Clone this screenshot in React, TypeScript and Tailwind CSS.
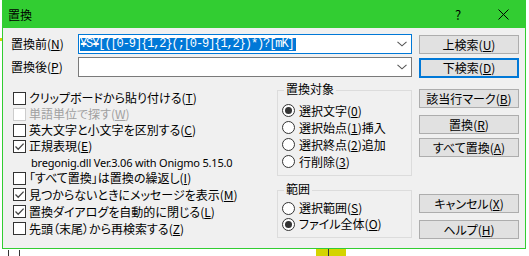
import type { ReactNode } from 'react'

const ui = "font-['Noto_Sans_CJK_JP','Noto_Sans',sans-serif] [font-feature-settings:'palt'] text-[12px] leading-none text-black"

function Key({ c }: { c: string }) {
  return (
    <>
      (<span className="underline underline-offset-[1px]">{c}</span>)
    </>
  )
}

function Chevron() {
  return (
    <svg width="10" height="6" viewBox="0 0 10 6" className="shrink-0">
      <path d="M0.5 0.8 L5 4.8 L9.5 0.8" fill="none" stroke="#555" strokeWidth="1.1" />
    </svg>
  )
}

function Check({ checked, disabled, children }: { checked?: boolean; disabled?: boolean; children: ReactNode }) {
  return (
    <div className="flex items-center h-[16px]">
      <span
        className={
          disabled
            ? 'w-[13px] h-[13px] border border-[#cccccc] bg-white shrink-0'
            : 'w-[13px] h-[13px] border border-[#333333] bg-white shrink-0 flex items-center justify-center'
        }
      >
        {checked && (
          <svg width="11" height="11" viewBox="0 0 11 11">
            <path d="M1.5 5.5 L4.2 8.2 L9.6 2.6" fill="none" stroke="#444" strokeWidth="1.3" />
          </svg>
        )}
      </span>
      <span className={disabled ? 'ml-[3px] text-[#a0a0a0] whitespace-nowrap' : 'ml-[3px] whitespace-nowrap'}>{children}</span>
    </div>
  )
}

function Radio({ on, children, h }: { on?: boolean; children: ReactNode; h: string }) {
  return (
    <div className={`flex items-center ${h}`}>
      <span className="w-[13px] h-[13px] rounded-full border border-[#333333] bg-white shrink-0 flex items-center justify-center">
        {on && <span className="w-[7px] h-[7px] rounded-full bg-[#333333]" />}
      </span>
      <span className="ml-[4px] whitespace-nowrap">{children}</span>
    </div>
  )
}

function Btn({ children, focus, mt }: { children: ReactNode; focus?: boolean; mt: string }) {
  return (
    <div
      className={
        focus
          ? `${mt} h-[20px] border-2 border-[#0078d7] bg-[#e1e1e1] flex items-center justify-center`
          : `${mt} h-[19px] border border-[#adadad] bg-[#e1e1e1] flex items-center justify-center`
      }
    >
      {children}
    </div>
  )
}

export default function App() {
  return (
    <div className={`relative w-[529px] h-[256px] bg-white overflow-hidden ${ui}`}>
      {/* what shows under the dialog */}
      <div className="absolute left-0 top-[38px] w-[2px] h-[3px] bg-[#d4d400]" />
      <div className="absolute left-[316px] top-[249px] w-[30px] h-[7px] bg-[#d4d400]" />
      <div className="absolute left-[8px] top-[250px] w-[1px] h-[6px] bg-[#333]" />
      <div className="absolute left-[19px] top-[250px] w-[1px] h-[6px] bg-[#333]" />
      <div className="absolute left-[328px] top-[249px] w-[1px] h-[7px] bg-[#333]" />

      <div className="ml-[2px] w-[524px] h-[249px] border border-[#32cd32] bg-[#f0f0f0] flex flex-col">
        {/* title bar */}
        <div className="h-[27px] bg-[#32cd32] flex items-center shrink-0">
          <span className="pl-[5px]">置換</span>
          <span className="ml-auto w-[46px] text-center text-[13px]">?</span>
          <span className="w-[44px] flex justify-center">
            <svg width="11" height="11" viewBox="0 0 11 11">
              <path d="M0.5 0.5 L10.5 10.5 M10.5 0.5 L0.5 10.5" stroke="#000" strokeWidth="1" />
            </svg>
          </span>
        </div>

        {/* body */}
        <div className="flex pt-[6px] pl-[8px]">
          <div className="w-[401px] flex flex-col">
            <div className="flex items-center h-[20px]">
              <span className="w-[67px]">
                置換前<Key c="N" />
              </span>
              <div className="w-[334px] h-[20px] border border-[#0078d7] bg-white flex items-center pl-[1px] pr-[4px]">
                <span className="h-[13px] leading-[13px] bg-[#0078d7] text-white font-['Liberation_Mono',monospace] text-[12px] tracking-[-1.1px] whitespace-nowrap pr-[2px]">
                  ¥S¥[([0-9]{'{'}1,2{'}'}(;[0-9]{'{'}1,2{'}'})*)?[mK]
                </span>
                <span className="ml-auto">
                  <Chevron />
                </span>
              </div>
            </div>
            <div className="flex items-center h-[20px] mt-[3px]">
              <span className="w-[67px]">
                置換後<Key c="P" />
              </span>
              <div className="w-[334px] h-[20px] border border-[#7a7a7a] bg-white flex items-center pr-[4px]">
                <span className="ml-auto">
                  <Chevron />
                </span>
              </div>
            </div>

            <div className="flex mt-[13px]">
              <div className="w-[266px] pl-[2px] flex flex-col">
                <Check>
                  クリップボードから貼り付ける<Key c="T" />
                </Check>
                <Check disabled>
                  単語単位で探す<Key c="W" />
                </Check>
                <Check>
                  英大文字と小文字を区別する<Key c="C" />
                </Check>
                <Check checked>
                  正規表現<Key c="E" />
                </Check>
                <div className="h-[16px] flex items-center pl-[18px] whitespace-nowrap font-['Noto_Sans',sans-serif] text-[11px] tracking-[-0.2px]">
                  bregonig.dll Ver.3.06 with Onigmo 5.15.0
                </div>
                <Check>
                  「すべて置換」は置換の繰返し<Key c="I" />
                </Check>
                <div className="h-[17px] flex items-center">
                  <Check checked>
                    見つからないときにメッセージを表示<Key c="M" />
                  </Check>
                </div>
                <div className="h-[17px] flex items-center">
                  <Check checked>
                    置換ダイアログを自動的に閉じる<Key c="L" />
                  </Check>
                </div>
                <div className="h-[17px] flex items-center">
                  <Check>
                    先頭（末尾）から再検索する<Key c="Z" />
                  </Check>
                </div>
              </div>

              <div className="w-[135px] flex flex-col">
                <div className="relative h-[86px] border border-[#dcdcdc] pt-[11px] pl-[4px]">
                  <span className="absolute -top-[8px] left-[6px] px-[2px] bg-[#f0f0f0]">置換対象</span>
                  <Radio on h="h-[17px]">
                    選択文字<Key c="0" />
                  </Radio>
                  <Radio h="h-[17px]">
                    選択始点<Key c="1" />挿入
                  </Radio>
                  <Radio h="h-[17px]">
                    選択終点<Key c="2" />追加
                  </Radio>
                  <Radio h="h-[17px]">
                    行削除<Key c="3" />
                  </Radio>
                </div>
                <div className="relative mt-[14px] h-[48px] border border-[#dcdcdc] pt-[9px] pl-[4px]">
                  <span className="absolute -top-[8px] left-[6px] px-[2px] bg-[#f0f0f0]">範囲</span>
                  <Radio h="h-[16px]">
                    選択範囲<Key c="S" />
                  </Radio>
                  <Radio on h="h-[16px]">
                    ファイル全体<Key c="O" />
                  </Radio>
                </div>
              </div>
            </div>
          </div>

          <div className="ml-[7px] w-[100px] flex flex-col">
            <Btn mt="mt-[1px]">
              上検索<Key c="U" />
            </Btn>
            <Btn focus mt="mt-[4px]">
              下検索<Key c="D" />
            </Btn>
            <Btn mt="mt-[11px]">
              該当行マーク<Key c="B" />
            </Btn>
            <Btn mt="mt-[7px]">
              置換<Key c="R" />
            </Btn>
            <Btn mt="mt-[4px]">
              すべて置換<Key c="A" />
            </Btn>
            <Btn mt="mt-[37px]">
              キャンセル<Key c="X" />
            </Btn>
            <Btn mt="mt-[7px]">
              ヘルプ<Key c="H" />
            </Btn>
          </div>
        </div>
      </div>
    </div>
  )
}
